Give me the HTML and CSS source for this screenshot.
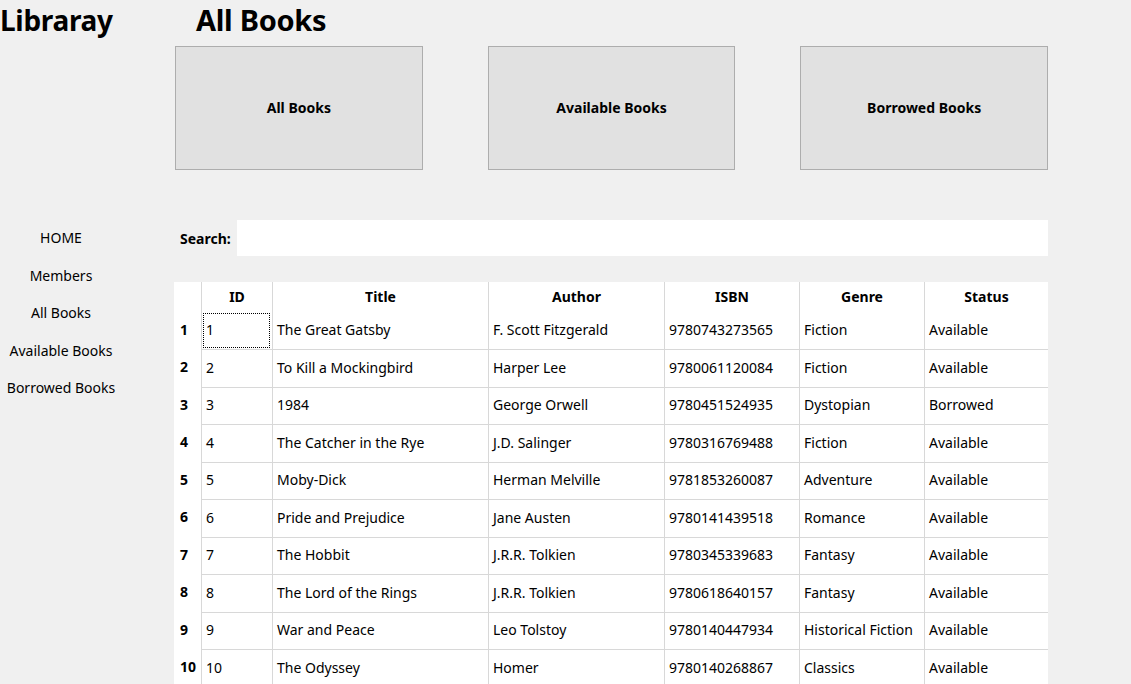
FILE: index.html
```html
<!DOCTYPE html>
<html>
<head>
<meta charset="utf-8">
<link rel="stylesheet" href="styles.css">
</head>
<body>
<div class="app">
  <aside class="sidebar">
    <div class="brand">Libraray</div>
    <nav class="nav">
      <div class="nav-item">HOME</div>
      <div class="nav-item">Members</div>
      <div class="nav-item">All Books</div>
      <div class="nav-item">Available Books</div>
      <div class="nav-item">Borrowed Books</div>
    </nav>
  </aside>
  <main class="main">
    <h1 class="title">All Books</h1>
    <div class="tiles">
      <div class="tile">All Books</div>
      <div class="tile">Available Books</div>
      <div class="tile">Borrowed Books</div>
    </div>
    <div class="search">
      <span class="search-label">Search:</span>
      <div class="search-input"></div>
    </div>
    <div class="grid">
      <div class="hd corner"></div>
      <div class="hd">ID</div>
      <div class="hd">Title</div>
      <div class="hd">Author</div>
      <div class="hd">ISBN</div>
      <div class="hd">Genre</div>
      <div class="hd">Status</div>

      <div class="rn first">1</div>
      <div class="c first"><span class="focus">1</span></div>
      <div class="c first">The Great Gatsby</div>
      <div class="c first">F. Scott Fitzgerald</div>
      <div class="c first">9780743273565</div>
      <div class="c first">Fiction</div>
      <div class="c first">Available</div>

      <div class="rn">2</div><div class="c">2</div><div class="c">To Kill a Mockingbird</div><div class="c">Harper Lee</div><div class="c">9780061120084</div><div class="c">Fiction</div><div class="c">Available</div>
      <div class="rn">3</div><div class="c">3</div><div class="c">1984</div><div class="c">George Orwell</div><div class="c">9780451524935</div><div class="c">Dystopian</div><div class="c">Borrowed</div>
      <div class="rn">4</div><div class="c">4</div><div class="c">The Catcher in the Rye</div><div class="c">J.D. Salinger</div><div class="c">9780316769488</div><div class="c">Fiction</div><div class="c">Available</div>
      <div class="rn">5</div><div class="c">5</div><div class="c">Moby-Dick</div><div class="c">Herman Melville</div><div class="c">9781853260087</div><div class="c">Adventure</div><div class="c">Available</div>
      <div class="rn">6</div><div class="c">6</div><div class="c">Pride and Prejudice</div><div class="c">Jane Austen</div><div class="c">9780141439518</div><div class="c">Romance</div><div class="c">Available</div>
      <div class="rn">7</div><div class="c">7</div><div class="c">The Hobbit</div><div class="c">J.R.R. Tolkien</div><div class="c">9780345339683</div><div class="c">Fantasy</div><div class="c">Available</div>
      <div class="rn">8</div><div class="c">8</div><div class="c">The Lord of the Rings</div><div class="c">J.R.R. Tolkien</div><div class="c">9780618640157</div><div class="c">Fantasy</div><div class="c">Available</div>
      <div class="rn">9</div><div class="c">9</div><div class="c">War and Peace</div><div class="c">Leo Tolstoy</div><div class="c">9780140447934</div><div class="c">Historical Fiction</div><div class="c">Available</div>
      <div class="rn">10</div><div class="c">10</div><div class="c">The Odyssey</div><div class="c">Homer</div><div class="c">9780140268867</div><div class="c">Classics</div><div class="c">Available</div>
    </div>
  </main>
</div>
</body>
</html>
```
FILE: styles.css
```css
* { box-sizing: border-box; }
html, body {
  margin: 0;
  padding: 0;
  background: #f0f0f0;
  font-family: "Noto Sans", "Open Sans", sans-serif;
  color: #000;
  overflow: hidden;
  height: 684px;
}
.app {
  display: flex;
  width: 1131px;
  height: 684px;
}
.sidebar {
  width: 122px;
  flex: none;
}
.brand {
  font-size: 28px;
  font-weight: 700;
  line-height: 38px;
  margin-top: 1px;
  letter-spacing: -0.3px;
}
.nav {
  margin-top: 186px;
  display: flex;
  flex-direction: column;
}
.nav-item {
  height: 37.5px;
  line-height: 25px;
  text-align: center;
  font-size: 14px;
}
.main {
  flex: none;
  width: 874px;
  margin-left: 52px;
}
.title {
  margin: 0;
  padding-left: 22px;
  font-size: 29px;
  font-weight: 700;
  line-height: 40px;
  letter-spacing: -0.3px;
}
.tiles {
  margin-top: 6px;
  display: flex;
  gap: 65px;
  padding-left: 1px;
}
.tile {
  width: 248px;
  height: 124px;
  background: #e1e1e1;
  border: 1px solid #adadad;
  display: flex;
  align-items: center;
  justify-content: center;
  font-weight: 700;
  font-size: 14px;
  padding-bottom: 1px;
}
.search {
  margin-top: 50px;
  display: flex;
  align-items: center;
  height: 36px;
}
.search-label {
  width: 63px;
  padding-left: 6px;
  font-weight: 700;
  font-size: 14px;
}
.search-input {
  flex: 1;
  height: 36px;
  background: #fff;
}
.grid {
  margin-top: 26px;
  display: grid;
  grid-template-columns: 27px 71px 216px 176px 135px 125px 124px;
  grid-template-rows: 30px 37px repeat(9, 37.5px);
  background: #fff;
  font-size: 14px;
}
.hd {
  font-weight: 700;
  text-align: center;
  line-height: 30px;
  border-left: 1px solid #d8d8d8;
}
.hd.corner { border-left: none; }
.rn {
  font-weight: 700;
  padding-left: 6px;
  padding-bottom: 2px;
  display: flex;
  align-items: center;
}
.c {
  border-left: 1px solid #d8d8d8;
  border-top: 1px solid #d8d8d8;
  display: flex;
  align-items: center;
  padding-left: 4px;
  padding-bottom: 2px;
}
.c.first { border-top: none; }
.focus {
  display: flex;
  align-items: center;
  width: 67px;
  height: 35px;
  margin-left: -3px;
  margin-top: 2px;
  padding-left: 2px;
  padding-bottom: 2px;
  border: 1px dotted #000;
}
```
